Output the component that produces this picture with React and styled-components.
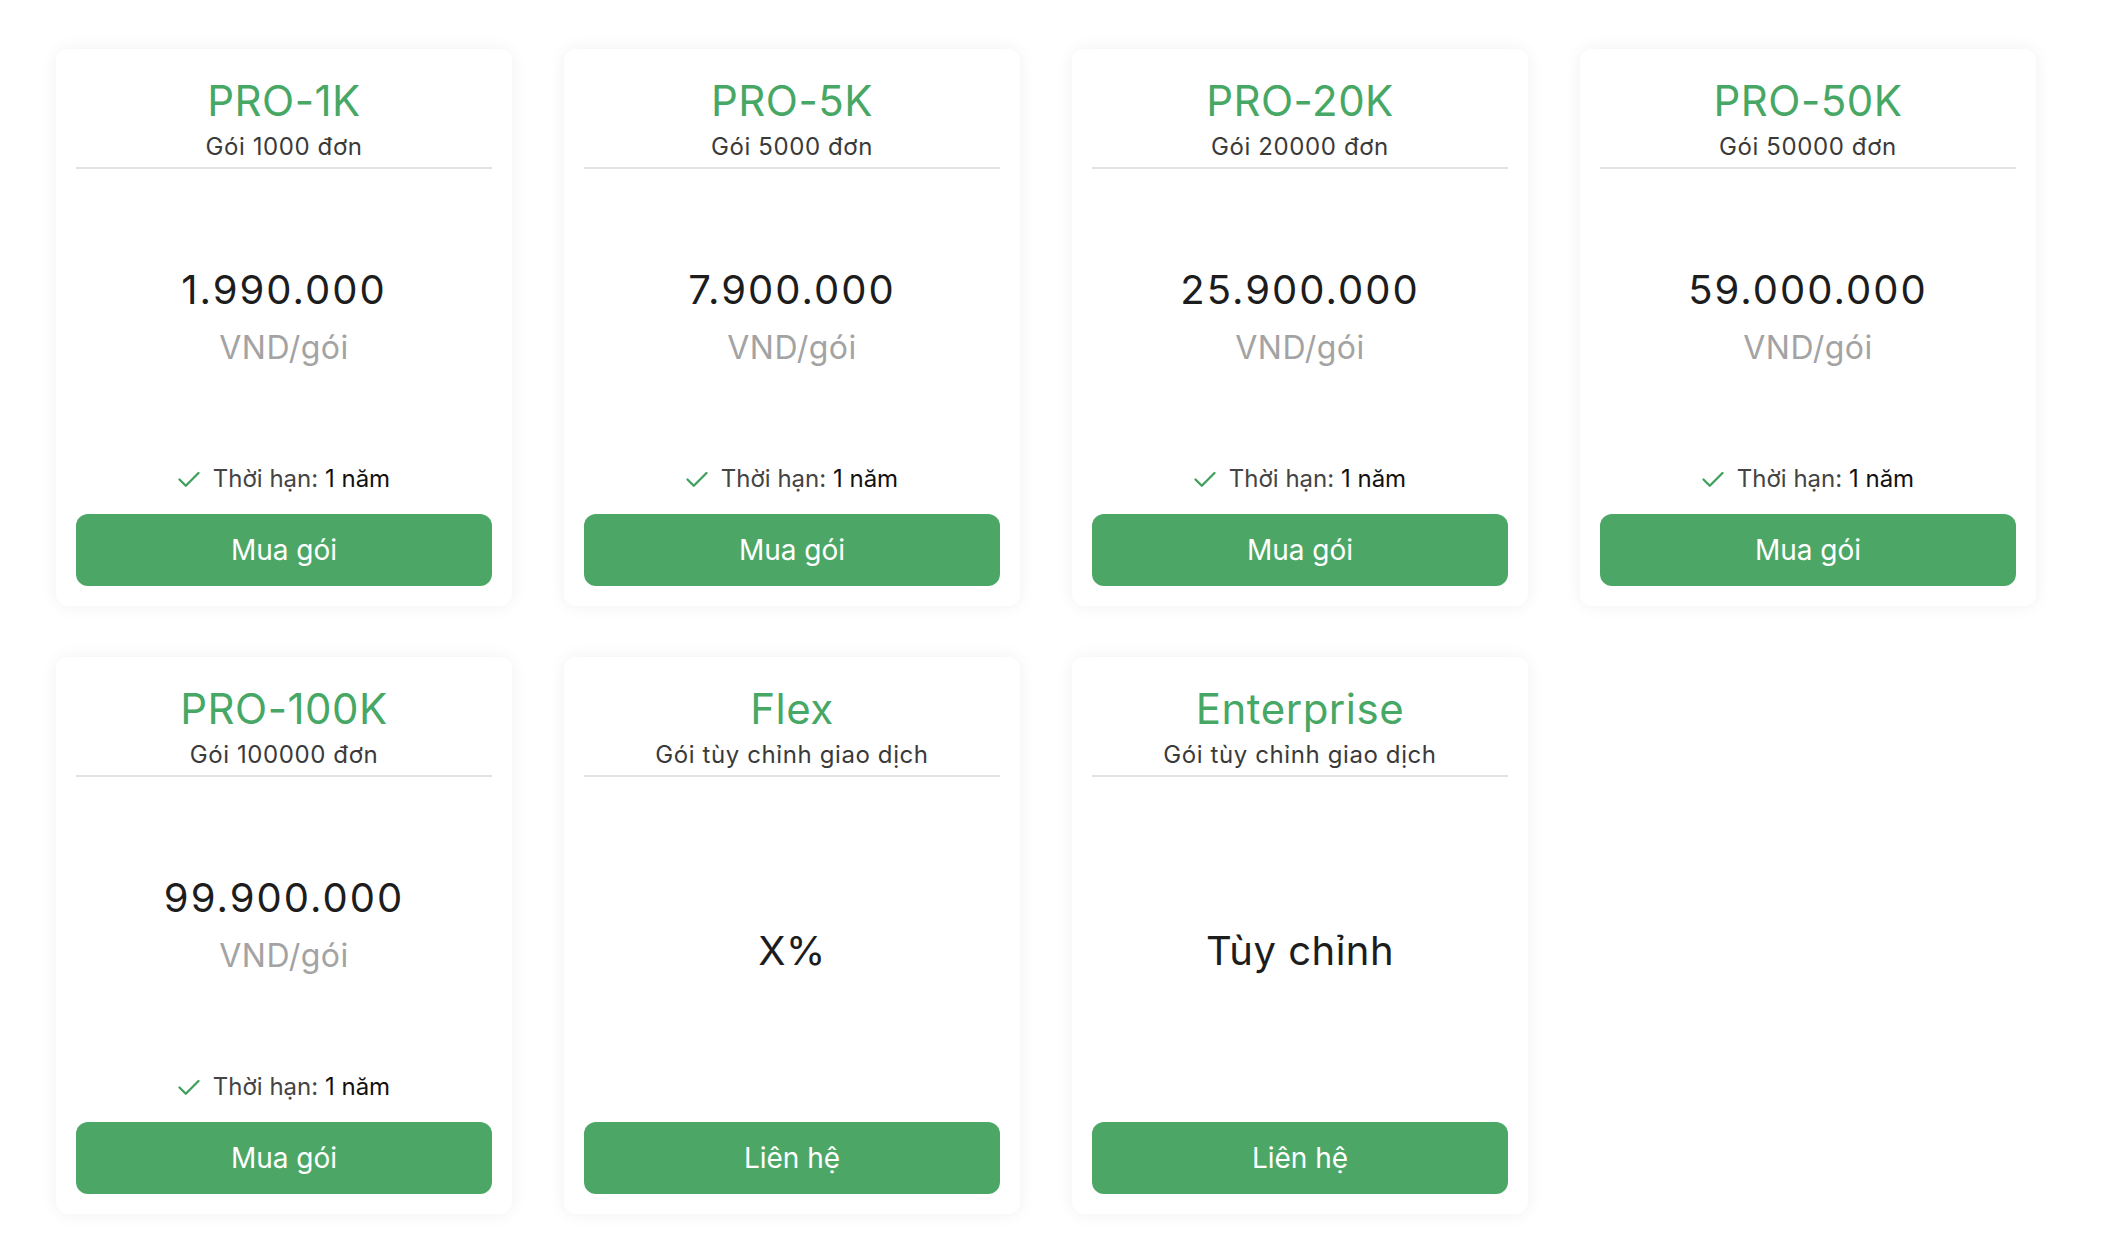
import styled, { createGlobalStyle } from "styled-components";

const GlobalStyle = createGlobalStyle`
  html, body {
    margin: 0;
    padding: 0;
    background: #ffffff;
    font-family: Inter, "Noto Sans", "Liberation Sans", sans-serif;
  }
`;

const Page = styled.div`
  padding: 49px 0 40px 56px;
`;

const Grid = styled.div`
  display: grid;
  grid-template-columns: repeat(4, 456px);
  column-gap: 52px;
  row-gap: 51px;
`;

const Card = styled.div`
  display: flex;
  flex-direction: column;
  height: 557px;
  box-sizing: border-box;
  padding: 27px 20px 20px;
  background: #fff;
  border-radius: 12px;
  box-shadow: 0 0 18px rgba(0, 0, 0, 0.06);
`;

const Header = styled.div`
  text-align: center;
  padding-bottom: 5px;
  border-bottom: 2px solid #e3e3e3;
`;

const Title = styled.div`
  color: #47a764;
  font-size: 42px;
  line-height: 50px;
  letter-spacing: 0.5px;
`;

const Subtitle = styled.div`
  margin-top: 5px;
  color: #3a3a3a;
  font-size: 24px;
  line-height: 31px;
  letter-spacing: 0.6px;
`;

const Body = styled.div`
  flex: 1;
  display: flex;
  flex-direction: column;
  align-items: center;
  justify-content: center;
  text-align: center;
  padding-top: ${(p) => (p.$custom ? "22px" : "0")};
`;

const Price = styled.div`
  color: #1d1d1d;
  font-size: 40px;
  line-height: 48px;
  letter-spacing: ${(p) => (p.$custom ? "0.5px" : "2px")};
`;

const Unit = styled.div`
  margin-top: 14px;
  color: #a3a3a3;
  font-size: 32px;
  line-height: 40px;
  letter-spacing: 0.5px;
`;

const Feature = styled.div`
  display: flex;
  align-items: center;
  justify-content: center;
  gap: 13px;
  font-size: 24px;
  line-height: 30px;
  color: #444;

  b {
    font-weight: 400;
    color: #111;
  }
`;

const Button = styled.button`
  margin-top: 20px;
  height: 72px;
  width: 100%;
  border: none;
  border-radius: 12px;
  background: #4ca766;
  color: #fff;
  font-family: inherit;
  font-size: 28px;
  cursor: pointer;
`;

const CheckIcon = () => (
  <svg width="22" height="17" viewBox="0 0 22 17" fill="none">
    <path d="M1.5 8.5 L7.8 14.8 L20.5 2" stroke="#3f9f5c" strokeWidth="2.3" strokeLinecap="round" strokeLinejoin="round" />
  </svg>
);

const plans = [
  { name: "PRO-1K", sub: "Gói 1000 đơn", price: "1.990.000" },
  { name: "PRO-5K", sub: "Gói 5000 đơn", price: "7.900.000" },
  { name: "PRO-20K", sub: "Gói 20000 đơn", price: "25.900.000" },
  { name: "PRO-50K", sub: "Gói 50000 đơn", price: "59.000.000" },
  { name: "PRO-100K", sub: "Gói 100000 đơn", price: "99.900.000" },
  { name: "Flex", sub: "Gói tùy chỉnh giao dịch", custom: "X%" },
  { name: "Enterprise", sub: "Gói tùy chỉnh giao dịch", custom: "Tùy chỉnh" },
];

export default function App() {
  return (
    <Page>
      <GlobalStyle />
      <Grid>
        {plans.map((p) => (
          <Card key={p.name}>
            <Header>
              <Title>{p.name}</Title>
              <Subtitle>{p.sub}</Subtitle>
            </Header>
            <Body $custom={!p.price}>
              {p.price ? (
                <>
                  <Price>{p.price}</Price>
                  <Unit>VND/gói</Unit>
                </>
              ) : (
                <Price $custom>{p.custom}</Price>
              )}
            </Body>
            {p.price && (
              <Feature>
                <CheckIcon />
                <span>
                  Thời hạn: <b>1 năm</b>
                </span>
              </Feature>
            )}
            <Button>{p.price ? "Mua gói" : "Liên hệ"}</Button>
          </Card>
        ))}
      </Grid>
    </Page>
  );
}
